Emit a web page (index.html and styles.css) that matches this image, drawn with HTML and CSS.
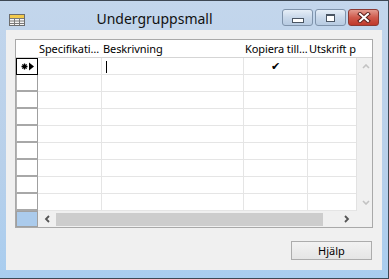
FILE: index.html
```html
<html>
  <head>
    <title>Undergruppsmall</title>
    <link rel="stylesheet" href="styles.css">
  </head>
  <body>
    <div class="window">
      <div class="titlebar">
        <svg class="app-icon" width="16" height="12" viewBox="0 0 16 12">
          <rect x="0.5" y="0.5" width="15" height="11" fill="#f4f4f4" stroke="#6d6d6d"/>
          <rect x="1" y="1" width="14" height="3" fill="#f2c94c"/>
          <path d="M1 4.5h14M1 7h14M1 9.5h14M5.5 4v7M10.5 4v7" stroke="#7a7a7a" stroke-width="1"/>
        </svg>
        <div class="title">Undergruppsmall</div>
        <div class="caption-buttons">
          <div class="cap-btn"><span class="glyph-min"></span></div>
          <div class="cap-btn"><span class="glyph-max"></span></div>
          <div class="cap-btn close">
            <svg width="14" height="11" viewBox="0 0 14 11">
              <path d="M3 2l8 7M11 2l-8 7" stroke="#5a1e1a" stroke-width="4" stroke-linecap="square"/>
              <path d="M3 2l8 7M11 2l-8 7" stroke="#fff" stroke-width="2" stroke-linecap="square"/>
            </svg>
          </div>
        </div>
      </div>

      <div class="client">
        <div class="grid">
          <!-- header -->
          <div class="hcell"></div>
          <div class="hcell">Specifikati…</div>
          <div class="hcell">Beskrivning</div>
          <div class="hcell">Kopiera till…</div>
          <div class="hcell">Utskrift p</div>
          <div class="hcell"></div>

          <!-- new row -->
          <div class="rowsel current">
            <svg width="14" height="9" viewBox="0 0 14 9">
              <path d="M3.5 1.5v6M0.5 4.5h6M1.4 2.4l4.2 4.2M5.6 2.4l-4.2 4.2" stroke="#000" stroke-width="1.3"/>
              <path d="M8 0.5l5 4-5 4z" fill="#000"/>
            </svg>
          </div>
          <div class="cell"></div>
          <div class="cell"><span class="caret"></span></div>
          <div class="cell check">✔</div>
          <div class="cell last"></div>

          <div class="rowsel"></div><div class="cell"></div><div class="cell"></div><div class="cell"></div><div class="cell last"></div>
          <div class="rowsel"></div><div class="cell"></div><div class="cell"></div><div class="cell"></div><div class="cell last"></div>
          <div class="rowsel"></div><div class="cell"></div><div class="cell"></div><div class="cell"></div><div class="cell last"></div>
          <div class="rowsel"></div><div class="cell"></div><div class="cell"></div><div class="cell"></div><div class="cell last"></div>
          <div class="rowsel"></div><div class="cell"></div><div class="cell"></div><div class="cell"></div><div class="cell last"></div>
          <div class="rowsel"></div><div class="cell"></div><div class="cell"></div><div class="cell"></div><div class="cell last"></div>
          <div class="rowsel"></div><div class="cell"></div><div class="cell"></div><div class="cell"></div><div class="cell last"></div>
          <div class="rowsel"></div><div class="cell"></div><div class="cell"></div><div class="cell"></div><div class="cell last"></div>

          <div class="vscroll">
            <div class="sbtn">
              <svg width="8" height="5" viewBox="0 0 8 5"><path d="M1 4l3-3 3 3" fill="none" stroke="#c2c2c2" stroke-width="1.6"/></svg>
            </div>
            <div class="sbtn">
              <svg width="8" height="5" viewBox="0 0 8 5"><path d="M1 1l3 3 3-3" fill="none" stroke="#c2c2c2" stroke-width="1.6"/></svg>
            </div>
          </div>

          <!-- footer -->
          <div class="select-all"></div>
          <div class="hscroll">
            <div class="sbtn">
              <svg width="6" height="8" viewBox="0 0 6 8"><path d="M5 1L2 4l3 3" fill="none" stroke="#555" stroke-width="1.8"/></svg>
            </div>
            <div class="thumb"></div>
            <div class="track-end"></div>
            <div class="sbtn">
              <svg width="6" height="8" viewBox="0 0 6 8"><path d="M1 1l3 3-3 3" fill="none" stroke="#555" stroke-width="1.8"/></svg>
            </div>
          </div>
          <div class="corner"></div>
        </div>

        <div class="actions">
          <button type="button">Hjälp</button>
        </div>
      </div>
    </div>
  </body>
</html>
```

FILE: styles.css
```css
body {
	margin: 0;
	font-family: "Noto Sans", "Open Sans", sans-serif;
	background: #fff;
}

.window {
	width: 389px;
	height: 279px;
	box-sizing: border-box;
	border-top: 1px solid #3e4854;
	border-right: 1px solid #3e4854;
	border-bottom: 1px solid #3e4854;
	background: linear-gradient(#c3d6ec, #b8d0ea 60%, #a9cdef);
	padding: 0 6px 8px 6px;
	display: flex;
	flex-direction: column;
}

/* title bar */

.titlebar {
	height: 29px;
	display: flex;
	align-items: flex-start;
}

.app-icon {
	margin: 13px 0 0 3px;
}

.title {
	flex: 1;
	text-align: center;
	font-size: 14px;
	line-height: 20px;
	margin-top: 8px;
	padding-left: 2px;
	color: #111;
}

.caption-buttons {
	display: flex;
	gap: 2px;
	margin: 8px 3px 0 0;
}

.cap-btn {
	width: 31px;
	height: 17px;
	box-sizing: border-box;
	border: 1px solid #7f93ab;
	border-radius: 3px;
	background: linear-gradient(#e6eef7, #c9d8ea 50%, #b7cbe2);
	display: flex;
	align-items: center;
	justify-content: center;
}

.cap-btn.close {
	border-color: #8c3a33;
	background: linear-gradient(#e39a8e, #cf5a4c 50%, #c0392b);
}

.glyph-min {
	width: 10px;
	height: 3px;
	margin-top: 5px;
	border: 1px solid #4a5563;
	background: #fff;
}

.glyph-max {
	width: 7px;
	height: 5px;
	border: 1px solid #4a5563;
	border-top-width: 2px;
	background: #fff;
}

/* client area */

.client {
	flex: 1;
	background: #f0f0f0;
	padding: 9px 9px 0 9px;
}

.grid {
	width: 358px;
	box-sizing: border-box;
	border: 1px solid #a9a9a9;
	background: #fff;
	display: grid;
	grid-template-columns: 22px 64px 142px 64px 48px 16px;
	grid-template-rows: 18px repeat(9, 17px) 16px;
	font-size: 11px;
	color: #000;
}

.hcell {
	box-sizing: border-box;
	border-bottom: 1px solid #d5d5d5;
	padding-left: 1px;
	line-height: 17px;
	white-space: nowrap;
	overflow: hidden;
	letter-spacing: -0.1px;
}

.cell {
	box-sizing: border-box;
	border-right: 1px solid #e5e5e5;
	border-bottom: 1px solid #e5e5e5;
	position: relative;
}

.cell.last {
	border-right: none;
}

.check {
	text-align: center;
	font-size: 11px;
	line-height: 16px;
}

.caret {
	position: absolute;
	left: 4px;
	top: 3px;
	width: 1px;
	height: 12px;
	background: #000;
}

.rowsel {
	box-sizing: border-box;
	border-left: 1px solid #b4b4b4;
	border-right: 1px solid #a0a0a0;
	border-bottom: 2px solid #a8a8a8;
	background: #fff;
}

.rowsel.current {
	border: 1px solid #000;
	display: flex;
	align-items: center;
	padding-left: 4px;
}

.vscroll {
	grid-column: 6;
	grid-row: 2 / span 9;
	background: #f0f0f0;
	border-left: 1px solid #e2e2e2;
	display: flex;
	flex-direction: column;
	justify-content: space-between;
}

.sbtn {
	height: 17px;
	min-width: 18px;
	display: flex;
	align-items: center;
	justify-content: center;
}

.select-all {
	box-sizing: border-box;
	border: 1px solid #a0a0a0;
	background: #abcbec;
}

.hscroll {
	grid-column: 2 / span 4;
	background: #f0f0f0;
	display: flex;
}

.hscroll .sbtn {
	height: 16px;
}

.thumb {
	width: 267px;
	height: 13px;
	margin-top: 2px;
	background: #cdcdcd;
}

.track-end {
	flex: 1;
}

.corner {
	background: #f0f0f0;
}

/* buttons */

.actions {
	display: flex;
	justify-content: flex-end;
	margin: 13px 1px 0 0;
}

button {
	width: 81px;
	height: 19px;
	border: 1px solid #acacac;
	background: linear-gradient(#f2f2f2, #e5e5e5);
	font-family: "Noto Sans", "Open Sans", sans-serif;
	font-size: 11px;
	padding: 0;
	color: #000;
}
```
